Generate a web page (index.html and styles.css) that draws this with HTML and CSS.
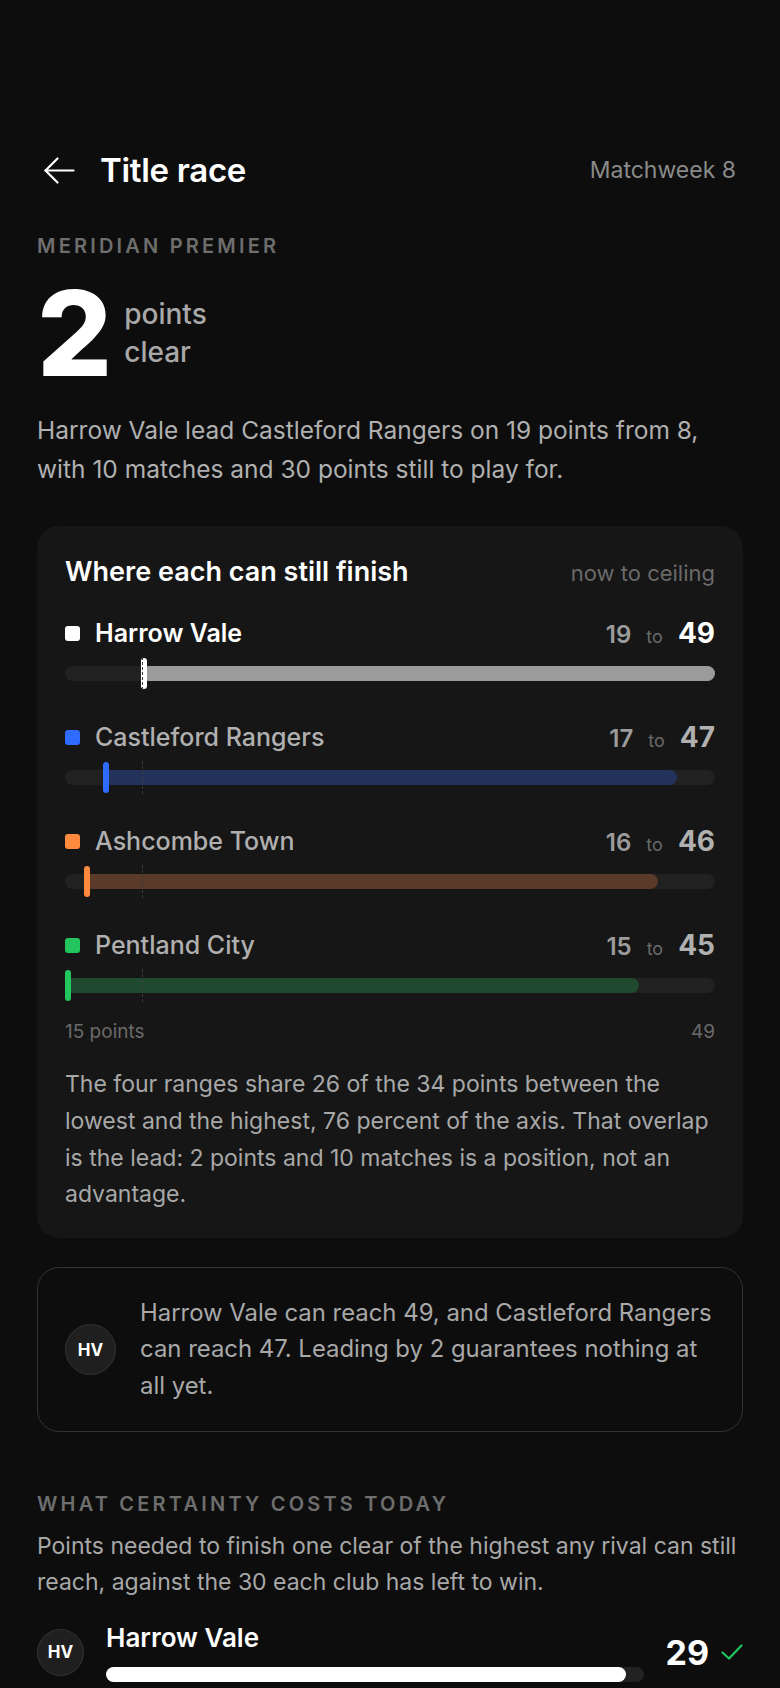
FILE: index.html
```html
<!DOCTYPE html>
<html lang="en">
<head>
    <meta charset="UTF-8">
    <meta name="viewport" content="width=device-width, initial-scale=1.0">
    <title>Title race</title>
    <link rel="stylesheet" href="styles.css">
</head>
<body>
    <main class="page">
        <header class="topbar">
            <a class="back" href="#" aria-label="Back">
                <svg width="31" height="27" viewBox="0 0 31 27" fill="none" stroke="#fff" stroke-width="2.2" stroke-linecap="round" stroke-linejoin="round">
                    <path d="M29.5 13.5H1.5"/>
                    <path d="M13.5 1.5 1.5 13.5l12 12"/>
                </svg>
            </a>
            <h1>Title race</h1>
            <span class="week">Matchweek 8</span>
        </header>

        <p class="eyebrow">Meridian Premier</p>
        <div class="lead">
            <span class="lead-num">2</span>
            <span class="lead-unit">points<br>clear</span>
        </div>
        <p class="summary">Harrow Vale lead Castleford Rangers on 19 points from 8, with 10 matches and 30 points still to play for.</p>

        <section class="card">
            <div class="card-head">
                <h2>Where each can still finish</h2>
                <span class="hint">now to ceiling</span>
            </div>

            <div class="race">
                <div class="team leader">
                    <div class="team-row">
                        <span class="swatch white"></span>
                        <span class="team-name">Harrow Vale</span>
                        <span class="span-nums"><b class="now">19</b><i>to</i><b class="ceil">49</b></span>
                    </div>
                    <div class="track">
                        <span class="fill white" style="left: 11.76%; width: 88.24%;"></span>
                        <span class="mark white" style="left: 11.76%;"></span>
                        <span class="ref" style="left: 11.76%;"></span>
                    </div>
                </div>

                <div class="team">
                    <div class="team-row">
                        <span class="swatch blue"></span>
                        <span class="team-name">Castleford Rangers</span>
                        <span class="span-nums"><b class="now">17</b><i>to</i><b class="ceil">47</b></span>
                    </div>
                    <div class="track">
                        <span class="fill blue" style="left: 5.88%; width: 88.24%;"></span>
                        <span class="mark blue" style="left: 5.88%;"></span>
                        <span class="ref" style="left: 11.76%;"></span>
                    </div>
                </div>

                <div class="team">
                    <div class="team-row">
                        <span class="swatch orange"></span>
                        <span class="team-name">Ashcombe Town</span>
                        <span class="span-nums"><b class="now">16</b><i>to</i><b class="ceil">46</b></span>
                    </div>
                    <div class="track">
                        <span class="fill orange" style="left: 2.94%; width: 88.24%;"></span>
                        <span class="mark orange" style="left: 2.94%;"></span>
                        <span class="ref" style="left: 11.76%;"></span>
                    </div>
                </div>

                <div class="team">
                    <div class="team-row">
                        <span class="swatch green"></span>
                        <span class="team-name">Pentland City</span>
                        <span class="span-nums"><b class="now">15</b><i>to</i><b class="ceil">45</b></span>
                    </div>
                    <div class="track">
                        <span class="fill green" style="left: 0%; width: 88.24%;"></span>
                        <span class="mark green" style="left: 0%;"></span>
                        <span class="ref" style="left: 11.76%;"></span>
                    </div>
                </div>
            </div>

            <div class="axis">
                <span>15 points</span>
                <span>49</span>
            </div>

            <p class="card-note">The four ranges share 26 of the 34 points between the lowest and the highest, 76 percent of the axis. That overlap is the lead: 2 points and 10 matches is a position, not an advantage.</p>
        </section>

        <aside class="callout">
            <span class="badge">HV</span>
            <p>Harrow Vale can reach 49, and Castleford Rangers can reach 47. Leading by 2 guarantees nothing at all yet.</p>
        </aside>

        <section class="costs">
            <p class="eyebrow">What certainty costs today</p>
            <p class="costs-intro">Points needed to finish one clear of the highest any rival can still reach, against the 30 each club has left to win.</p>

            <div class="cost-item">
                <span class="badge small">HV</span>
                <div class="cost-main">
                    <span class="cost-name">Harrow Vale</span>
                    <div class="cost-track">
                        <span class="cost-fill" style="width: 96.7%;"></span>
                    </div>
                </div>
                <div class="cost-value">
                    <b>29</b>
                    <svg width="22" height="16" viewBox="0 0 22 16" fill="none" stroke="#22c55e" stroke-width="2.2" stroke-linecap="round" stroke-linejoin="round">
                        <path d="M1.5 8.5l6.5 6L20.5 1.5"/>
                    </svg>
                </div>
            </div>
        </section>
    </main>
</body>
</html>
```

FILE: styles.css
```css
/* General Styles */
body {
    margin: 0;
    padding: 0;
    background: #0d0d0d;
    color: #fff;
    font-family: 'Inter', 'Noto Sans', sans-serif;
}

.page {
    padding: 150px 37px 0;
    box-sizing: border-box;
    min-height: 100vh;
}

/* Header */
.topbar {
    display: flex;
    align-items: center;
    height: 40px;
}

.back {
    display: flex;
    margin-left: 7px;
    margin-right: 25px;
}

.topbar h1 {
    margin: 0;
    font-size: 33px;
    font-weight: 600;
    letter-spacing: -0.3px;
    flex: 1;
}

.week {
    color: #8a8a8a;
    font-size: 23px;
    margin-right: 7px;
}

/* Hero */
.eyebrow {
    margin: 46px 0 0;
    font-size: 20px;
    line-height: 20px;
    font-weight: 600;
    letter-spacing: 3.2px;
    text-transform: uppercase;
    color: #6e6e6e;
}

.lead {
    display: flex;
    align-items: center;
    margin-top: 17px;
}

.lead-num {
    font-size: 118px;
    line-height: 120px;
    font-weight: 800;
    letter-spacing: -3px;
}

.lead-unit {
    margin-left: 15px;
    font-size: 28px;
    line-height: 38px;
    font-weight: 500;
    color: #a8a8a8;
}

.summary {
    margin: 18px 0 0;
    font-size: 24.5px;
    line-height: 38.7px;
    color: #b0b0b0;
}

/* Range card */
.card {
    margin-top: 38px;
    padding: 31px 28px 25px;
    background: #161616;
    border-radius: 22px;
}

.card-head {
    display: flex;
    justify-content: space-between;
    align-items: baseline;
    height: 30px;
    line-height: 30px;
}

.card-head h2 {
    margin: 0;
    font-size: 27px;
    font-weight: 600;
}

.hint {
    color: #6a6a6a;
    font-size: 22px;
}

.race {
    display: flex;
    flex-direction: column;
    gap: 32px;
    margin-top: 31px;
}

.team-row {
    display: flex;
    align-items: center;
    height: 30px;
}

.swatch {
    width: 15px;
    height: 15px;
    border-radius: 3px;
    margin-right: 15px;
}

.team-name {
    flex: 1;
    font-size: 25px;
    font-weight: 500;
    color: #b0b0b0;
}

.leader .team-name {
    color: #fff;
    font-weight: 600;
}

.span-nums {
    display: flex;
    align-items: baseline;
}

.span-nums b {
    font-size: 24px;
    font-weight: 600;
    color: #9c9c9c;
}

.span-nums i {
    font-style: normal;
    font-size: 18px;
    color: #6a6a6a;
    margin: 0 15px;
}

.span-nums .ceil {
    font-size: 28px;
    font-weight: 700;
    color: #b0b0b0;
}

.leader .span-nums .ceil {
    color: #fff;
}

.track {
    position: relative;
    height: 15px;
    margin: 18px 0 9px;
    background: #212121;
    border-radius: 8px;
}

.fill {
    position: absolute;
    top: 0;
    bottom: 0;
    border-radius: 8px;
}

.mark {
    position: absolute;
    top: -8px;
    width: 6px;
    height: 31px;
    border-radius: 3px;
}

.ref {
    position: absolute;
    top: -9px;
    height: 33px;
    width: 0;
    border-left: 1px dashed #3c3c3c;
    transform: translateX(1px);
}

.swatch.white, .mark.white { background: #fff; }
.fill.white { background: #9b9b9b; }
.swatch.blue, .mark.blue { background: #2f6bff; }
.fill.blue { background: #22325a; }
.swatch.orange, .mark.orange { background: #ff8a3d; }
.fill.orange { background: #5a3b29; }
.swatch.green, .mark.green { background: #22c55e; }
.fill.green { background: #1f4a2f; }

.axis {
    display: flex;
    justify-content: space-between;
    margin-top: 20px;
    font-size: 19px;
    line-height: 20px;
    color: #6a6a6a;
}

.card-note {
    margin: 24px 0 0;
    font-size: 23px;
    line-height: 36.6px;
    color: #a8a8a8;
}

/* Callout */
.callout {
    display: flex;
    align-items: center;
    gap: 24px;
    margin-top: 29px;
    padding: 27px 28px 26px 27px;
    border: 1px solid #333;
    border-radius: 22px;
}

.callout p {
    margin: 0;
    font-size: 23.9px;
    line-height: 36.6px;
    color: #a8a8a8;
}

.badge {
    flex: none;
    display: flex;
    align-items: center;
    justify-content: center;
    width: 49px;
    height: 49px;
    border-radius: 50%;
    background: #1f1f1f;
    border: 1px solid #333;
    font-size: 17px;
    font-weight: 700;
    color: #fff;
}

.badge.small {
    width: 45px;
    height: 45px;
}

/* Costs */
.costs .eyebrow {
    margin-top: 62px;
}

.costs-intro {
    margin: 14px 0 0;
    font-size: 23px;
    line-height: 36.6px;
    color: #a8a8a8;
}

.cost-item {
    display: flex;
    align-items: center;
    margin-top: 22px;
}

.cost-main {
    flex: 1;
    margin-left: 22px;
}

.cost-name {
    display: block;
    font-size: 26px;
    line-height: 30px;
    font-weight: 600;
}

.cost-track {
    margin-top: 14px;
    height: 15px;
    background: #222;
    border-radius: 8px;
}

.cost-fill {
    display: block;
    height: 100%;
    background: #fff;
    border-radius: 8px;
}

.cost-value {
    display: flex;
    align-items: center;
    gap: 12px;
    margin-left: 22px;
}

.cost-value b {
    font-size: 34px;
    font-weight: 700;
}
```
